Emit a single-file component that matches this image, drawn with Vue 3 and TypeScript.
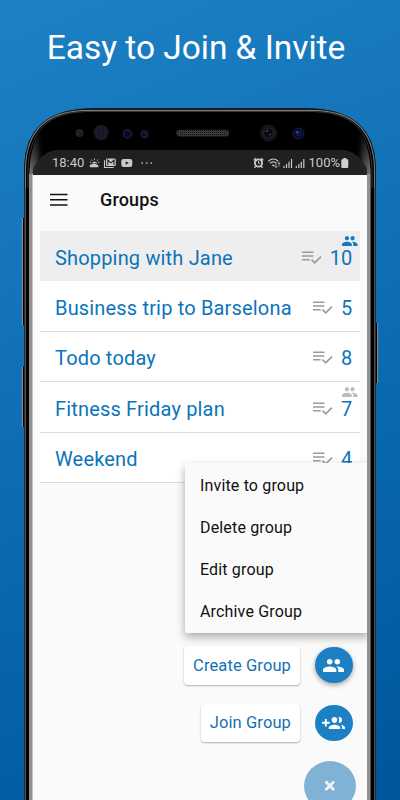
<script setup lang="ts">
interface Group {
  name: string
  count: number
  shared?: boolean
  selected?: boolean
}

const groups: Group[] = [
  { name: 'Shopping with Jane', count: 10, shared: true, selected: true },
  { name: 'Business trip to Barselona', count: 5 },
  { name: 'Todo today', count: 8 },
  { name: 'Fitness Friday plan', count: 7, shared: true },
  { name: 'Weekend', count: 4 },
]

const menuItems: string[] = ['Invite to group', 'Delete group', 'Edit group', 'Archive Group']
</script>

<template>
  <main class="promo">
    <h1 class="headline">Easy to Join &amp; Invite</h1>

    <section class="phone">
      <svg class="frame" viewBox="0 0 400 692" aria-hidden="true">
        <defs>
          <linearGradient id="glassL" x1="0" x2="1">
            <stop offset="0" stop-color="#8a8a8a" />
            <stop offset=".45" stop-color="#555" />
            <stop offset="1" stop-color="#000" stop-opacity="0" />
          </linearGradient>
          <linearGradient id="glassR" x1="1" x2="0">
            <stop offset="0" stop-color="#8a8a8a" />
            <stop offset=".45" stop-color="#555" />
            <stop offset="1" stop-color="#000" stop-opacity="0" />
          </linearGradient>
          <linearGradient id="fade" x1="0" y1="0" x2="0" y2="1">
            <stop offset="0" stop-color="#fff" stop-opacity=".08" />
            <stop offset="1" stop-color="#fff" />
          </linearGradient>
          <mask id="fadeMask"><rect y="22" width="400" height="50" fill="url(#fade)" /><rect y="72" width="400" height="620" fill="#fff" /></mask>
          <pattern id="mesh" width="2" height="2" patternUnits="userSpaceOnUse">
            <rect width="2" height="2" fill="#3a3a3a" />
            <rect width="1" height="1" fill="#151515" />
          </pattern>
        </defs>
        <path d="M22.500 110h3v107h-3zM22.500 258.500h3v60.500h-3zM375 215h3v60h-3z" fill="#000" />
        <path d="M22.400 110v107M22.400 258.500v60.500M377.600 215v60" stroke="#b8b0a8" stroke-width=".8" />
        <path d="M24.500 692V59Q25.500 0.500 94 0.500H306Q374.500 0.500 375.500 59V692z" fill="#000" stroke="#101a24" stroke-width="1" />
        <path d="M25.500 692V60Q27 2.700 88 2.400H312Q373 2.700 374.500 60V692" fill="none" stroke="#787878" stroke-width="1.100" />
        <path d="M28 692V58Q31 4.500 86 3.500H314Q369 4.500 372 58V692" fill="none" stroke="#4c4c4c" stroke-width=".7" />
        <path d="M25.200 692V80M374.800 692V80" stroke="#444" stroke-width="1" />
        <path d="M27.500 692V80M372.500 692V80" stroke="#000" stroke-width="3" />
        <g mask="url(#fadeMask)">
          <path d="M29.500 692V62Q31 32 45 16V692z" fill="url(#glassL)" />
          <path d="M370.500 692V62Q369 32 355 16V692z" fill="url(#glassR)" />
        </g>
        <path d="M33 67V61Q43 42 58 42H342Q357 42 367 61V67z" fill="#222" opacity=".93" />
        <rect x="29" y="66" width="4" height="626" fill="#948e8d" />
        <rect x="32" y="66" width="1" height="626" fill="#c5c2c2" />
        <rect x="367" y="66" width="4" height="626" fill="#909392" />
        <rect x="370" y="66" width="1" height="626" fill="#555" />
        <circle cx="79.500" cy="25" r="4" fill="#202020" />
        <circle cx="101" cy="24.500" r="7.800" fill="#151523" />
        <path d="M97 19v11M101 18v13M105 19v11" stroke="#24243a" />
        <circle cx="127.500" cy="26" r="5" fill="#18182a" /><circle cx="127.500" cy="26" r="3" fill="#060630" />
        <circle cx="144.500" cy="26.200" r="4.200" fill="#1b1b30" /><circle cx="144.500" cy="26.200" r="2" fill="#05051c" /><circle cx="145" cy="25.700" r=".8" fill="#35355c" />
        <rect x="176.500" y="22" width="52.500" height="6.300" rx="3" fill="url(#mesh)" stroke="#292929" stroke-width=".6" />
        <circle cx="268.500" cy="25" r="8.500" fill="#151515" /><circle cx="268.500" cy="25" r="5" fill="#090912" stroke="#292936" />
        <path d="M266 24l2-2M269 27l2-1" stroke="#48445c" stroke-width="1.200" />
        <circle cx="298.500" cy="25.500" r="5.500" fill="#080b2c" stroke="#1d2030" /><circle cx="298.500" cy="25.500" r="3" fill="#0a1455" /><circle cx="297.300" cy="24.300" r="1" fill="#5070b8" />
      </svg>

      <div class="screen">
        <div class="status">
          <span class="clock">18:40</span>
          <svg class="s-left" width="66" height="12" viewBox="0 0 66 12" fill="#c9c9c9">
            <path d="M1.500 10.200Q.2 9.600 .8 8.300Q1.700 7 3 7.500Q5 5.200 7.200 7.400Q9.800 7.300 9.500 9.300Q9.300 10.200 8.500 10.200z" />
            <path d="M3 6Q4.500 3.500 7 4.900Q8.700 6 8.200 7Q5.500 5 3.200 6.500z" />
            <path d="M5.500 1.500v1.600M2.200 2.500l1 1.300M9 2.500l-1 1.300M.7 5l1.400.6M10.300 5l-1.300.5" stroke="#c9c9c9" stroke-width=".9" />
            <path d="M15.500 3.200v7.300h9.300" fill="none" stroke="#c9c9c9" stroke-width="1.100" />
            <rect x="17" y="1.500" width="9.800" height="7.600" rx="1" />
            <path d="M18.800 8V3l3.100 2.800L25 3v5" fill="none" stroke="#222" stroke-width="1.100" />
            <rect x="32.300" y="2" width="11" height="8" rx="2.200" />
            <path d="M36.700 4.200v3.600l3-1.800z" fill="#222" />
            <circle cx="53.200" cy="6" r=".85" /><circle cx="57.700" cy="6" r=".85" /><circle cx="62.200" cy="6" r=".85" />
          </svg>
          <span class="grow"></span>
          <svg width="52" height="12" viewBox="0 0 52 12" fill="none" stroke="#c9c9c9">
            <circle cx="5.500" cy="6" r="3.600" stroke-width="1.900" />
            <path d="M.7 3.400L3 1.400M10.300 3.400L8 1.400M2.700 9.300l-1.200 1.500M8.300 9.300l1.200 1.500" stroke-width="1.400" />
            <path d="M5.500 4v2.300h1.700" />
            <path d="M15.300 4.200Q20.300 -.2 25.300 4.200M17 6.300Q20.300 3.500 23.600 6.300" stroke-width="1.200" />
            <path d="M18.500 7.700h3.600l-1.800 2z" fill="#c9c9c9" stroke="none" />
            <path d="M23 6.500v4M21.700 9l1.300 1.700L24.300 9M26 5.500v4M25 7l1-1.500 1 1.500" stroke-width=".7" />
            <path d="M31 9v2M33.500 7v4M36 4.800v6.200M38.500 2v9M43.300 9v2M45.800 7v4M48.300 4.800v6.200M50.800 2v9" stroke-width="1.200" />
          </svg>
          <span class="percent">100%</span>
          <svg class="battery" width="8" height="12" viewBox="0 0 8 12"><path d="M2.300 1h3v1.200h1q1 0 1 1V10q0 1-1 1h-5q-1 0-1-1V3.200q0-1 1-1h1z" fill="#d0d0d0" /></svg>
        </div>

        <header class="appbar">
          <svg width="18" height="14" viewBox="0 0 18 14"><path d="M0 1.500h17.500M0 6.800h17.500M0 12h17.500" stroke="#111" stroke-width="1.500" /></svg>
          <h2>Groups</h2>
        </header>

        <ul class="list">
          <li v-for="group in groups" :key="group.name" class="row" :class="{ selected: group.selected }">
            <span class="name">{{ group.name }}</span>
            <svg class="check" width="20" height="14" viewBox="0 0 20 14" fill="none" stroke="#9c9c9c" stroke-width="1.500">
              <path d="M0 1.200h11.500M0 5h11.500M0 8.800h7.700" />
              <path d="M9.500 8.700l3.200 3.200 6.300-6.300" stroke-width="1.700" />
            </svg>
            <span class="count">{{ group.count }}</span>
            <svg v-if="group.shared" class="people" viewBox="1 5 22 14" preserveAspectRatio="none">
              <path d="M16 11c1.660 0 2.990-1.340 2.990-3S17.660 5 16 5s-3 1.340-3 3 1.340 3 3 3zm-8 0c1.660 0 2.990-1.340 2.990-3S9.660 5 8 5 5 6.340 5 8s1.340 3 3 3zm0 2c-2.330 0-7 1.170-7 3.500V19h14v-2.500c0-2.330-4.670-3.500-7-3.500zm8 0c-.29 0-.62.020-.97.050 1.160.84 1.970 1.970 1.970 3.450V19h6v-2.500c0-2.330-4.670-3.500-7-3.500z" />
            </svg>
          </li>
        </ul>

        <div class="dial">
          <div class="action">
            <span class="label">Create Group</span>
            <button class="fab raised" aria-label="Create Group">
              <svg width="21" height="13" viewBox="1 5 22 14" preserveAspectRatio="none">
                <path d="M16 11c1.660 0 2.990-1.340 2.990-3S17.660 5 16 5s-3 1.340-3 3 1.340 3 3 3zm-8 0c1.660 0 2.990-1.340 2.990-3S9.660 5 8 5 5 6.340 5 8s1.340 3 3 3zm0 2c-2.330 0-7 1.170-7 3.500V19h14v-2.500c0-2.330-4.670-3.500-7-3.500zm8 0c-.29 0-.62.020-.97.050 1.160.84 1.970 1.970 1.970 3.450V19h6v-2.500c0-2.330-4.670-3.500-7-3.500z" />
              </svg>
            </button>
          </div>
          <div class="action">
            <span class="label">Join Group</span>
            <button class="fab" aria-label="Join Group">
              <svg width="23" height="12.500" viewBox="0 5 24 13" preserveAspectRatio="none">
                <path d="M8 10H5V7H3v3H0v2h3v3h2v-3h3v-2zm10 1c1.660 0 2.990-1.340 2.990-3S19.660 5 18 5c-.32 0-.63.050-.91.140.57.810.9 1.790.9 2.860s-.34 2.040-.9 2.860c.28.090.59.140.91.140zm-5 0c1.660 0 2.990-1.340 2.990-3S14.660 5 13 5c-1.660 0-3 1.340-3 3s1.340 3 3 3zm6.620 2.160c.83.730 1.380 1.660 1.380 2.840v2h3v-2c0-1.540-2.370-2.490-4.380-2.840zM13 13c-2 0-6 1-6 3v2h12v-2c0-2-4-3-6-3z" />
              </svg>
            </button>
          </div>
          <button class="close" aria-label="Close">
            <svg width="12" height="12" viewBox="0 0 12 12"><path d="M2.300 2.300l7 7M9.300 2.300l-7 7" stroke="#eef4f9" stroke-width="2.700" stroke-linecap="round" /></svg>
          </button>
        </div>

        <nav class="menu">
          <a v-for="item in menuItems" :key="item">{{ item }}</a>
        </nav>
      </div>
    </section>
  </main>
</template>

<style>
body {
  overflow: hidden;
}
</style>

<style scoped>
.promo {
  width: 400px;
  height: 800px;
  overflow: hidden;
  display: flex;
  flex-direction: column;
  background: linear-gradient(158deg, #1c81c5 0%, #1575ba 28%, #0866ac 64%, #00559a 100%);
  font-family: Roboto, sans-serif;
}
.headline {
  margin: 0;
  height: 108px;
  flex: none;
  box-sizing: border-box;
  padding: 28px 8px 0 0;
  text-align: center;
  color: #fff;
  font-size: 33.500px;
  letter-spacing: -0.040px;
  line-height: 40px;
  font-weight: 400;
}
.phone {
  position: relative;
  height: 692px;
  flex: none;
  box-sizing: border-box;
  padding: 42px 33px 0;
}
.frame {
  position: absolute;
  left: 0;
  top: 0;
  width: 400px;
  height: 692px;
}
.screen {
  position: relative;
  height: 650px;
  overflow: hidden;
  display: flex;
  flex-direction: column;
}
.status {
  height: 25px;
  flex: none;
  box-sizing: border-box;
  padding: 0 18px 0 19px;
  display: flex;
  align-items: center;
  color: #c9c9c9;
  font-size: 13px;
}
.s-left {
  margin-left: 5px;
}
.grow {
  flex: 1;
}
.percent {
  margin-left: 4px;
}
.battery {
  margin-left: 1px;
}
.appbar {
  height: 56px;
  flex: none;
  box-sizing: border-box;
  padding: 0 17px 7px;
  display: flex;
  align-items: center;
  gap: 32px;
  background: #fafafa;
}
.appbar h2 {
  margin: 0;
  font-size: 18px;
  font-weight: 500;
  letter-spacing: 0.150px;
  color: #111;
}
.list {
  margin: 0;
  padding: 0 7px;
  list-style: none;
  background: #fafafa;
}
.row {
  position: relative;
  height: 50.400px;
  box-sizing: border-box;
  border-bottom: 1px solid #dcdcdc;
  padding: 4px 7.500px 0 15px;
  display: flex;
  align-items: center;
  background: #fff;
  color: #0b74bb;
  font-size: 20px;
  letter-spacing: 0.170px;
}
.row.selected {
  background: #eee;
  border-color: #eee;
}
.name {
  flex: 1;
  white-space: nowrap;
}
.check {
  margin-right: 8px;
}
.people {
  position: absolute;
  right: 2.500px;
  top: 5px;
  width: 15.500px;
  height: 10px;
  fill: #bdbdbd;
}
.selected .people {
  fill: #1679be;
}
.dial {
  flex: 1;
  background: #fafafa;
  padding: 163px 14.500px 0 0;
  display: flex;
  flex-direction: column;
  align-items: flex-end;
}
.action {
  height: 39px;
  margin-bottom: 18.500px;
  display: flex;
  align-items: center;
  gap: 15px;
}
.label {
  height: 38.500px;
  box-sizing: border-box;
  padding: 0 9px;
  display: flex;
  align-items: center;
  border-radius: 4px;
  background: #fff;
  box-shadow: 0 1px 2px rgba(0, 0, 0, 0.3);
  color: #1570b3;
  font-size: 16.500px;
  letter-spacing: 0.110px;
}
.fab,
.close {
  border: 0;
  padding: 0;
  display: flex;
  align-items: center;
  justify-content: center;
  border-radius: 50%;
}
.fab {
  width: 37.500px;
  height: 36px;
  background: #1d80c4;
  fill: #fff;
}
.fab.raised {
  box-shadow: 0 2px 5px rgba(0, 0, 0, 0.35);
}
.close {
  width: 52px;
  height: 50px;
  flex: none;
  margin-right: -3px;
  background: #80b2d5;
}
.menu {
  position: absolute;
  left: 152px;
  top: 313px;
  width: 184px;
  height: 169.500px;
  box-sizing: border-box;
  padding: 1px 15px 0;
  border-radius: 2px;
  background: #fafafa;
  box-shadow: 0 4px 10px rgba(0, 0, 0, 0.32);
  color: #111;
  font-size: 16px;
  letter-spacing: 0.160px;
}
.menu a {
  display: flex;
  align-items: center;
  height: 42.200px;
}
</style>
